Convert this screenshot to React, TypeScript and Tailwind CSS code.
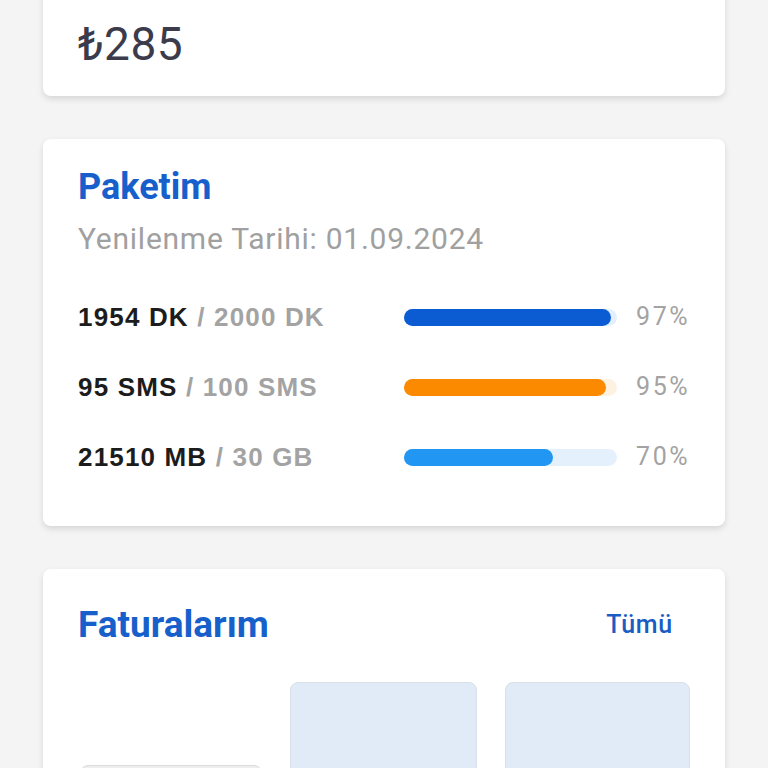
import React from "react";

const rows = [
  { used: "1954 DK", total: "2000 DK", pct: 97, fill: "bg-[#0b5bd3]", track: "bg-[#e4effc]" },
  { used: "95 SMS", total: "100 SMS", pct: 95, fill: "bg-[#fb8a00]", track: "bg-[#fdf2e2]" },
  { used: "21510 MB", total: "30 GB", pct: 70, fill: "bg-[#2196f3]", track: "bg-[#e4f0fc]" },
];

export default function App() {
  return (
    <div className="min-h-[768px] bg-[#f4f4f4] px-[43px] pb-10 font-['Roboto',sans-serif]">
      <div className="-mt-[20px] h-[116px] rounded-[8px] bg-white px-[35px] shadow-[0_3px_6px_rgba(0,0,0,0.12)] flex items-end pb-[29px]">
        <div className="text-[46px] leading-none tracking-[0.01em] text-[#3b3b4c]">₺285</div>
      </div>

      <div className="mt-[43px] rounded-[8px] bg-white px-[35px] pt-[28px] pb-[49px] shadow-[0_3px_6px_rgba(0,0,0,0.12)]">
        <div className="text-[36px] font-bold leading-[40px] text-[#1760cc]">Paketim</div>
        <div className="mt-[14px] text-[30px] leading-[36px] tracking-[0.025em] text-[#a0a0a0]">Yenilenme Tarihi: 01.09.2024</div>
        <div className="mt-[40px] flex flex-col gap-[30px]">
          {rows.map((r) => (
            <div key={r.used} className="flex h-[40px] items-center">
              <div className="flex-1 font-['Liberation_Sans',sans-serif] text-[26px] font-bold tracking-[0.045em]">
                <span className="text-[#1c1c1c]">{r.used}</span>
                <span className="text-[#a3a3a3]"> / {r.total}</span>
              </div>
              <div className={`h-[17px] w-[213px] rounded-full ${r.track}`}>
                <div className={`h-full rounded-full ${r.fill}`} style={{ width: `${r.pct}%` }} />
              </div>
              <div className="w-[73px] text-right text-[25px] tracking-[0.1em] text-[#a3a3a3]">{r.pct}%</div>
            </div>
          ))}
        </div>
      </div>

      <div className="mt-[43px] rounded-[8px] bg-white px-[35px] pt-[36px] shadow-[0_3px_6px_rgba(0,0,0,0.12)]">
        <div className="flex items-center justify-between">
          <div className="text-[37px] font-bold leading-[40px] text-[#1760cc]">Faturalarım</div>
          <div className="pr-[17px] text-[25px] font-medium tracking-[0.03em] text-[#1a5cc4]">Tümü</div>
        </div>
        <div className="mt-[37px] flex items-start gap-[28px] pl-[2px]">
          <div className="mt-[83px] h-[120px] w-[183px] rounded-[8px] border border-[#dcdcdc] bg-[#eeeeee]" />
          <div className="h-[200px] w-[187px] rounded-[8px] border border-[#d9e0ea] bg-[#e1eaf7]" />
          <div className="h-[200px] w-[186px] rounded-[8px] border border-[#d9e0ea] bg-[#e1eaf7]" />
        </div>
      </div>
    </div>
  );
}
